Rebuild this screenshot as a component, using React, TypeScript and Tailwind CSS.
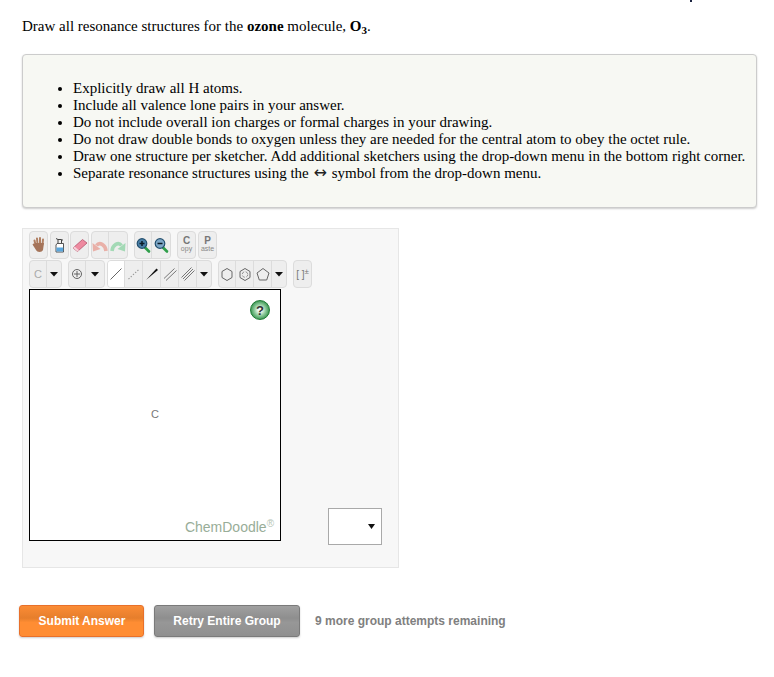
const bullets: React.ReactNode[] = [
  "Explicitly draw all H atoms.",
  "Include all valence lone pairs in your answer.",
  "Do not include overall ion charges or formal charges in your drawing.",
  "Do not draw double bonds to oxygen unless they are needed for the central atom to obey the octet rule.",
  "Draw one structure per sketcher. Add additional sketchers using the drop-down menu in the bottom right corner.",
  <>Separate resonance structures using the <span className="mx-px font-['DejaVu_Sans',sans-serif] text-[16px] leading-[0] text-[#222]">↔</span> symbol from the drop-down menu.</>,
]

function Group({ children, className = "" }: { children: React.ReactNode; className?: string }) {
  return (
    <div className={`flex h-[28px] shrink-0 rounded-[4px] border border-[#dcdcdc] bg-[#eeeeee] divide-x divide-[#dcdcdc] overflow-hidden ${className}`}>
      {children}
    </div>
  )
}

function Cell({ children, w = "w-[18px]", white = false }: { children?: React.ReactNode; w?: string; white?: boolean }) {
  return (
    <div className={`${w} h-full shrink-0 flex items-center justify-center ${white ? "bg-white" : ""}`}>
      {children}
    </div>
  )
}

function Icon({ children }: { children: React.ReactNode }) {
  return (
    <svg width="18" height="26" viewBox="0 0 18 26" fill="none" className="shrink-0">
      {children}
    </svg>
  )
}

const Caret = () => (
  <svg width="8" height="5" viewBox="0 0 8 5">
    <path d="M0 0H8L4 4.5Z" fill="#111" />
  </svg>
)

function ClipLabel({ big, small }: { big: string; small: string }) {
  return (
    <div className="flex flex-col items-center font-['Liberation_Sans',sans-serif] text-[#777] mb-[2px]">
      <span className="text-[10px] leading-[8px] font-bold">{big}</span>
      <span className="text-[7px] leading-[7px] text-[#888]">{small}</span>
    </div>
  )
}

const Magnifier = ({ minus = false }: { minus?: boolean }) => (
  <Icon>
    <path d="M11 15.5L15 19.5" stroke="#2f9e4a" strokeWidth="2.6" strokeLinecap="round" />
    <circle cx="8" cy="11.5" r="4.8" fill={minus ? "#7fa8c8" : "#4a80a8"} stroke="#24506f" strokeWidth="1.2" />
    <path d={minus ? "M5.5 11.5H10.5" : "M5.5 11.5H10.5M8 9V14"} stroke="#0b1a26" strokeWidth="1.5" />
  </Icon>
)

function Toolbar() {
  return (
    <div className="flex flex-col gap-px">
      <div className="flex">
        <Group>
          <Cell w="w-[17px]">
            <Icon>
              <path d="M5.5 13L4.5 8.5M7.5 12L7 6.5M10 12V6M12.5 12.5L13 7.5" stroke="#b07f62" strokeWidth="2" strokeLinecap="round" />
              <path d="M5 11H14L13 18C12 20.5 7 20.5 6 18L2.5 12.5C3.5 11 4.5 11.5 5 12Z" fill="#a5745a" />
            </Icon>
          </Cell>
        </Group>
        <Group className="ml-[2px]">
          <Cell w="w-[17px]">
            <Icon>
              <path d="M6 11.5H12.5V20H5V13Z" fill="#fff" stroke="#444" strokeWidth="0.9" />
              <path d="M5.4 15.5H12.2V19.6H5.4Z" fill="#5aa6dc" />
              <path d="M7 11V7.5H10.5V11M7 7.5L5 6.5M10.5 8H12" stroke="#444" strokeWidth="1" />
            </Icon>
          </Cell>
        </Group>
        <Group className="ml-[1px]">
          <Cell w="w-[17px]">
            <Icon>
              <path d="M2 16L11.5 7.5L16 11L6.5 19.5Z" fill="#ee8aa0" stroke="#b5566e" strokeWidth="0.8" />
              <path d="M2 16L3.5 14.6L8 18.2L6.5 19.5Z" fill="#f5d0d8" />
            </Icon>
          </Cell>
        </Group>
        <Group className="ml-[2px]">
          <Cell w="w-[17px]">
            <Icon>
              <path d="M15 19C14.5 12.5 8.5 9.5 5.5 13.5" stroke="#e9b0a8" strokeWidth="3.6" />
              <path d="M1.5 11L9.5 17L2 19.5Z" fill="#e9b0a8" />
            </Icon>
          </Cell>
          <Cell>
            <Icon>
              <path d="M3 19C3.5 12.5 9.5 9.5 12.5 13.5" stroke="#a3d9b5" strokeWidth="3.6" />
              <path d="M16.5 11L8.5 17L16 19.5Z" fill="#a3d9b5" />
            </Icon>
          </Cell>
        </Group>
        <Group className="ml-[6px]">
          <Cell w="w-[17px]"><Magnifier /></Cell>
          <Cell><Magnifier minus /></Cell>
        </Group>
        <Group className="ml-[6px]">
          <Cell w="w-[17px]"><ClipLabel big="C" small="opy" /></Cell>
        </Group>
        <Group className="ml-[2px]">
          <Cell w="w-[17px]"><ClipLabel big="P" small="aste" /></Cell>
        </Group>
      </div>
      <div className="flex">
        <Group>
          <Cell w="w-[17px]"><span className="font-['Liberation_Sans',sans-serif] text-[11px] text-[#aaa]">C</span></Cell>
          <Cell w="w-[14px]"><Caret /></Cell>
        </Group>
        <Group className="ml-[6px]">
          <Cell w="w-[17px]">
            <Icon>
              <circle cx="9" cy="13" r="4.5" stroke="#555" strokeWidth="0.9" />
              <path d="M6 13H12M9 10V16" stroke="#555" strokeWidth="0.9" />
            </Icon>
          </Cell>
          <Cell><Caret /></Cell>
        </Group>
        <Group className="ml-[2px]">
          <Cell w="w-[17px]" white>
            <Icon><path d="M3.5 18.5L14.5 7.5" stroke="#666" strokeWidth="1" /></Icon>
          </Cell>
          <Cell>
            <Icon><path d="M3.5 18L14.5 8" stroke="#999" strokeWidth="1.1" strokeDasharray="1.4 1.6" /></Icon>
          </Cell>
          <Cell>
            <Icon><path d="M3 19L13.5 7.5L15 9Z" fill="#111" /></Icon>
          </Cell>
          <Cell>
            <Icon><path d="M3 17.5L13.5 7.5M5 19.5L15.5 9.5" stroke="#777" strokeWidth="1" /></Icon>
          </Cell>
          <Cell>
            <Icon><path d="M2.5 16.5L12.5 6.5M4 18L14 8M5.5 19.5L15.5 9.5" stroke="#777" strokeWidth="1" /></Icon>
          </Cell>
          <Cell w="w-[14px]"><Caret /></Cell>
        </Group>
        <Group className="ml-[6px]">
          <Cell w="w-[17px]">
            <Icon><path d="M9 7.5L14 10.5V16.5L9 19.5L4 16.5V10.5Z" stroke="#666" strokeWidth="1" /></Icon>
          </Cell>
          <Cell>
            <Icon>
              <path d="M9 7.5L14 10.5V16.5L9 19.5L4 16.5V10.5Z" stroke="#666" strokeWidth="1" />
              <circle cx="9" cy="13.5" r="2.8" stroke="#888" strokeWidth="0.9" strokeDasharray="3 1.5" />
            </Icon>
          </Cell>
          <Cell>
            <Icon><path d="M9 7.5L15 12L12.7 19H5.3L3 12Z" stroke="#666" strokeWidth="1" /></Icon>
          </Cell>
          <Cell w="w-[14px]"><Caret /></Cell>
        </Group>
        <Group className="ml-[6px]">
          <Cell w="w-[17px]">
            <span className="whitespace-nowrap font-['Liberation_Sans',sans-serif] text-[10px] text-[#777]">[ ]<sup className="text-[8px]">±</sup></span>
          </Cell>
        </Group>
      </div>
    </div>
  )
}

export default function App() {
  return (
    <main className="relative min-h-[677px] bg-white pl-[22px] pr-[17px] pt-[18px] font-['Liberation_Serif',serif] text-[15px] leading-[17px] text-black">
      <span className="absolute left-[690px] top-0 h-[2px] w-[2px] bg-[#1b2440]" />

      <p>
        Draw all resonance structures for the <b>ozone</b> molecule, <b>O<sub className="text-[11px]">3</sub></b>.
      </p>

      <section className="mt-[19px] h-[154px] rounded-[4px] border border-[#cccccc] bg-[#f7f8f3] pt-[25px] shadow-[0_1px_2px_rgba(0,0,0,0.2)]">
        <ul className="list-disc pl-[50px]">
          {bullets.map((b, i) => <li key={i} className="whitespace-nowrap">{b}</li>)}
        </ul>
      </section>

      <section className="mt-[20px] h-[340px] w-[377px] border border-[#e6e6e6] bg-[#f7f7f7] pl-[6px] pt-[2px]">
        <Toolbar />
        <div className="mt-px flex items-start">
          <div className="relative h-[252px] w-[252px] shrink-0 border border-black bg-white font-['Liberation_Sans',sans-serif]">
            <div className="absolute right-[10px] top-[10px] flex h-[20px] w-[20px] items-center justify-center rounded-full border border-[#1d7a33] bg-[radial-gradient(circle,#f2faf3_15%,#8cc99a_45%,#2c8c44_80%,#1f7f38_100%)] text-[13px] font-bold leading-none text-[#333]">?</div>
            <span className="absolute left-[121px] top-[117px] text-[11px] leading-[14px] text-[#777]">C</span>
            <span className="absolute bottom-[5px] right-[6px] text-[14px] leading-[16px] text-[#98ad98]">
              ChemDoodle<sup className="text-[10px] text-[#b5c4b5]">®</sup>
            </span>
          </div>
          <div className="ml-[47px] mt-[219px] flex h-[37px] w-[54px] items-center justify-end border border-[#a9a9a9] bg-white pr-[6px]">
            <svg width="7" height="5" viewBox="0 0 7 5"><path d="M0 0H7L3.5 5Z" fill="#111" /></svg>
          </div>
        </div>
      </section>

      <div className="-ml-[3px] mt-[37px] flex items-center font-['Liberation_Sans',sans-serif] text-[12px] font-bold">
        <button className="h-[32px] w-[125px] rounded-[3px] border border-[#e8702a] bg-[linear-gradient(to_bottom,#fb8c35,#e67e2c_40%,#ff8d33_55%,#ff8d33)] pl-[1px] text-white shadow-[0_1px_2px_rgba(0,0,0,0.2)]">
          Submit Answer
        </button>
        <button className="ml-[10px] h-[32px] w-[146px] rounded-[3px] border border-[#7a7a7a] bg-[linear-gradient(to_bottom,#a0a0a0,#8e8e8e_40%,#979797_55%,#8f8f8f)] text-white shadow-[0_1px_2px_rgba(0,0,0,0.2)]">
          Retry Entire Group
        </button>
        <span className="ml-[15px] text-[#808080]">9 more group attempts remaining</span>
      </div>
    </main>
  )
}
